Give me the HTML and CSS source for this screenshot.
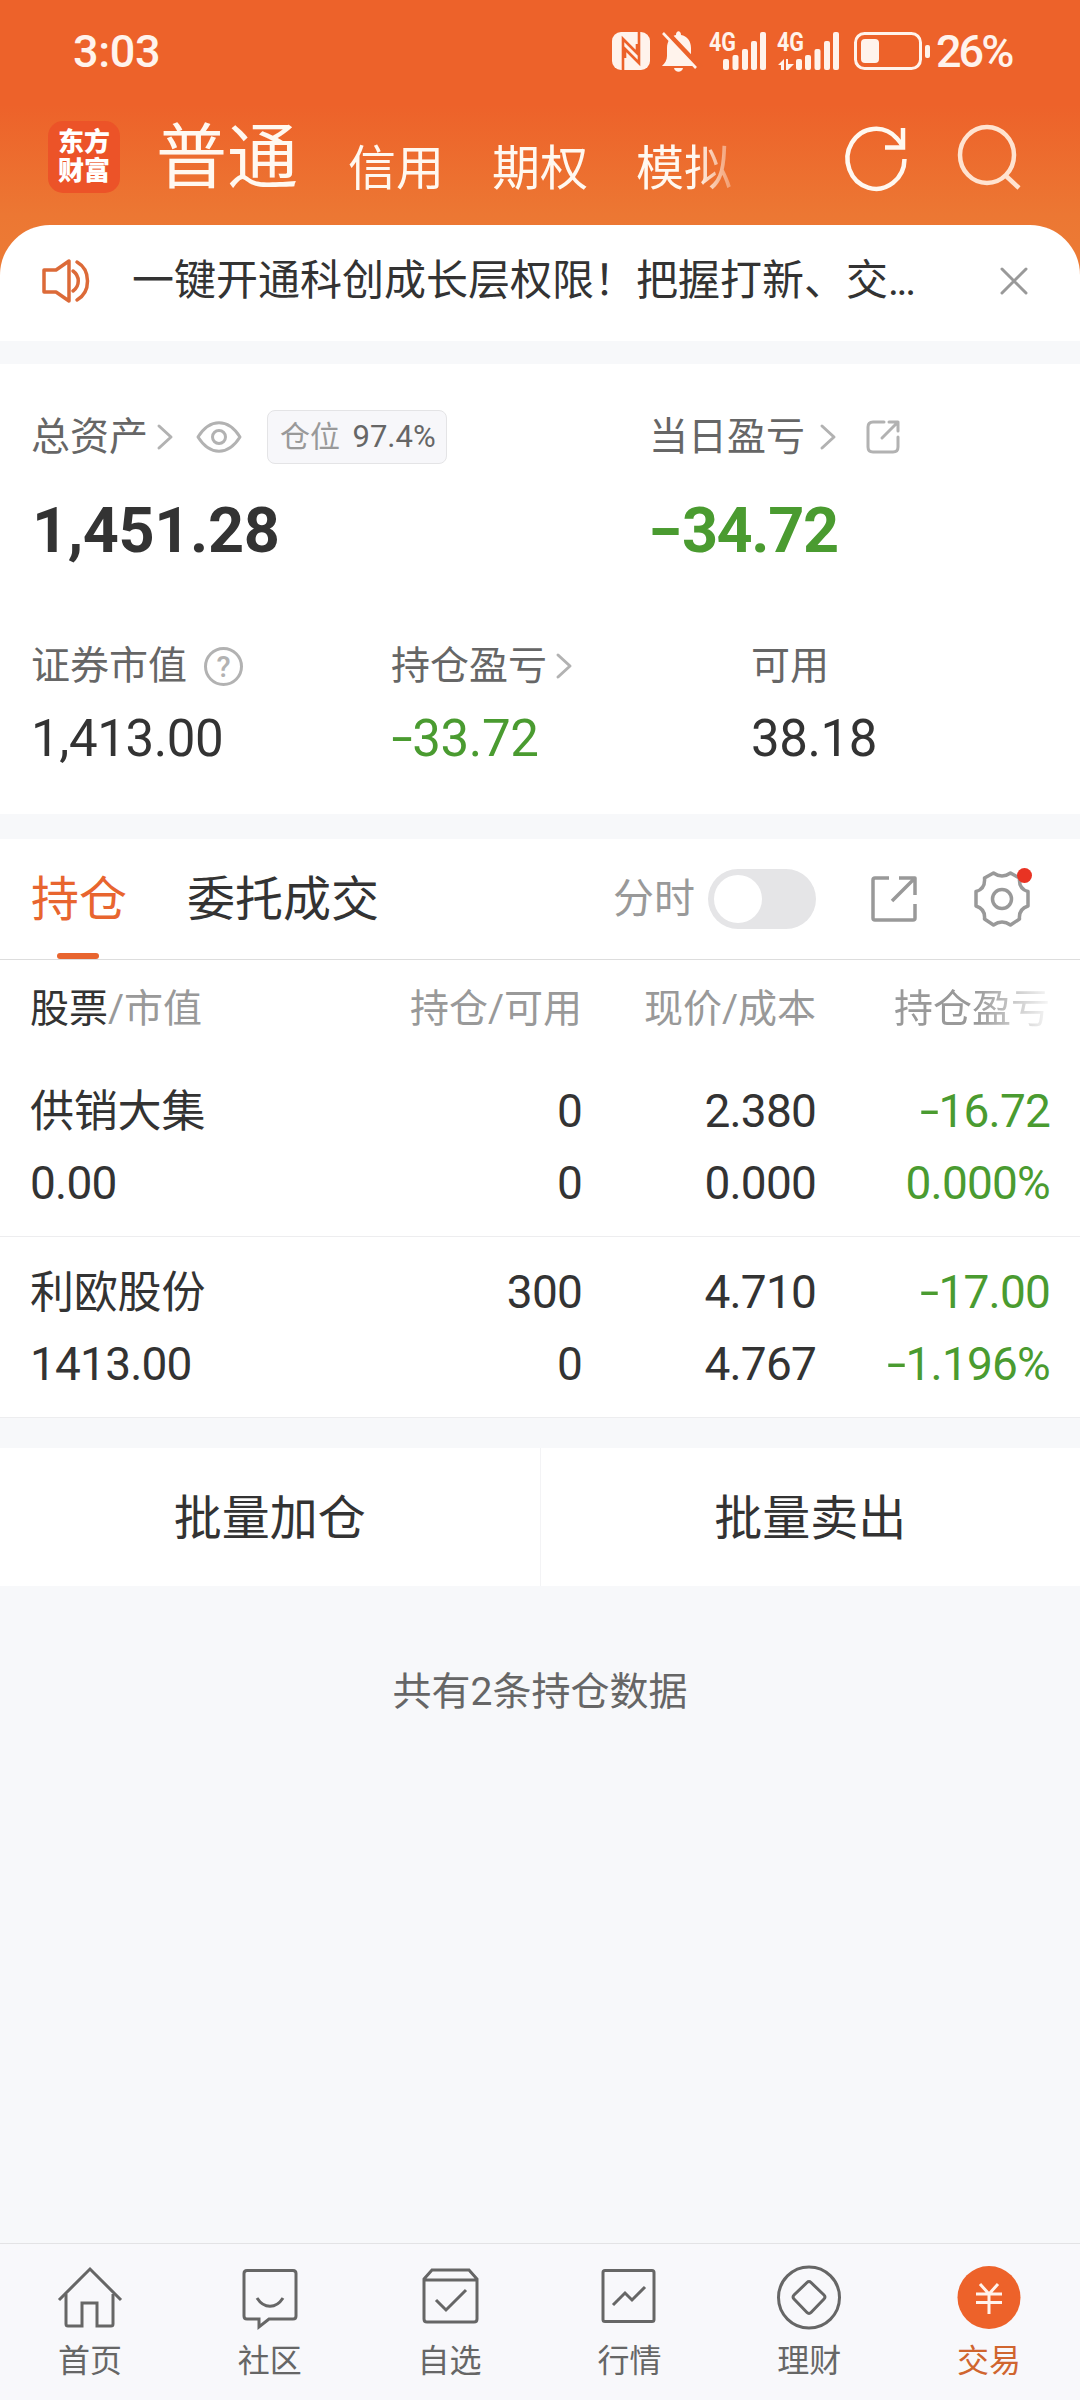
FILE: index.html
```html
<!DOCTYPE html>
<html lang="zh-CN">
<head>
    <meta charset="UTF-8">
    <meta name="viewport" content="width=device-width, initial-scale=1.0">
    <title>交易</title>
    <link rel="stylesheet" href="styles.css">
</head>
<body>
    <header class="top">
        <div class="status-bar">
            <span class="clock">3:03</span>
            <div class="status-icons">
                <svg class="nfc" width="38" height="38" viewBox="0 0 38 38">
                    <rect width="38" height="38" rx="9" fill="#fff3ec"/>
                    <path d="M11 38V7l14 14V12M27 0v31L13 17v9" fill="none" stroke="#ec622a" stroke-width="2.6"/>
                </svg>
                <svg class="bell" width="36" height="41" viewBox="0 0 36 41">
                    <path d="M0 35c3-3 5-6 5-10v-8c0-7 4-12 9-13 0-5 5-5 5 0 6 1 10 6 10 13v8c0 4 1 6 3 10z" fill="#fff3ec"/>
                    <path d="M12 37h9c-1 5-8 5-9 0z" fill="#fff3ec"/>
                    <path d="M3 0l35 37" stroke="#ec622a" stroke-width="6"/>
                    <path d="M1 2l33 35" stroke="#fff3ec" stroke-width="2.6"/>
                </svg>
                <svg class="signal" width="56" height="38" viewBox="0 0 56 38" fill="#fff3ec">
                    <text x="-1" y="19" textLength="27" lengthAdjust="spacingAndGlyphs" class="net">4G</text>
                    <rect x="13" y="27" width="6" height="11" rx="2"/>
                    <rect x="22.500" y="23" width="6" height="15" rx="2"/>
                    <rect x="32" y="17" width="6" height="21" rx="2"/>
                    <rect x="41" y="9" width="6" height="29" rx="2"/>
                    <rect x="50" y="0" width="6" height="38" rx="2"/>
                </svg>
                <svg class="signal" width="61" height="38" viewBox="0 0 61 38" fill="#fff3ec">
                    <text x="-1" y="19" textLength="27" lengthAdjust="spacingAndGlyphs" class="net">4G</text>
                    <path d="M0 33l6-6v11H3v-5zM8 27h2v5h6l-6 6H8z"/>
                    <rect x="18" y="27" width="6" height="11" rx="2"/>
                    <rect x="27" y="23" width="6" height="15" rx="2"/>
                    <rect x="36.500" y="17" width="6" height="21" rx="2"/>
                    <rect x="46" y="9" width="6" height="29" rx="2"/>
                    <rect x="55" y="0" width="6" height="38" rx="2"/>
                </svg>
                <svg class="battery" width="76" height="38" viewBox="0 0 76 38">
                    <rect x="1.500" y="1.500" width="65" height="35" rx="9" fill="none" stroke="#fff3ec" stroke-width="3"/>
                    <rect x="7" y="7" width="18" height="24" rx="4" fill="#fff3ec"/>
                    <rect x="71" y="13" width="5" height="13" rx="2" fill="#fff3ec"/>
                </svg>
                <span class="percent">26%</span>
            </div>
        </div>

        <div class="account-bar">
            <div class="logo"><span>东方</span><span>财富</span></div>
            <nav class="accounts">
                <a class="current">普通</a>
                <a>信用</a>
                <a>期权</a>
                <a>模拟</a>
            </nav>
            <svg class="refresh" width="62" height="64" viewBox="0 0 62 64" fill="none" stroke="#fff8f0" stroke-width="4.500">
                <path d="M59.500 33A28.500 30 0 1 1 52 12.500q4 4 6 9"/>
                <path d="M58 2v19.500H40"/>
            </svg>
            <svg class="search" width="64" height="66" viewBox="0 0 64 66" fill="none" stroke="#ffe3d0" stroke-width="4.500">
                <ellipse cx="29" cy="31" rx="27" ry="28"/>
                <path d="M47 51l14 13"/>
            </svg>
        </div>

        <div class="notice">
            <svg width="48" height="44" viewBox="0 0 48 44" fill="none" stroke="#dc6a38" stroke-width="3.500" stroke-linejoin="round" stroke-linecap="round">
                <path d="M2 11h12l13-9v40l-13-9H2z"/>
                <path d="M31 12c7 5 7 15 0 20M35 3c14 8 14 30 0 38"/>
            </svg>
            <p>一键开通科创成长层权限！把握打新、交<span class="dots">...</span></p>
            <svg class="close" width="28" height="28" viewBox="0 0 28 28" stroke="#999" stroke-width="3" stroke-linecap="round">
                <path d="M2 2l24 24M26 2L2 26"/>
            </svg>
        </div>
    </header>

    <section class="assets">
        <div class="main-row">
            <div class="asset">
                <div class="label">
                    <span>总资产</span>
                    <svg class="chevron" width="16" height="26" viewBox="0 0 16 26"><path d="M2 2l12 11L2 24"/></svg>
                    <svg class="eye" width="46" height="32" viewBox="0 0 46 32">
                        <path d="M2 16C14-3 32-3 44 16 32 35 14 35 2 16z"/>
                        <circle cx="23" cy="16" r="6.500"/>
                    </svg>
                    <span class="ratio">仓位 <b>97.4%</b></span>
                </div>
                <div class="big">1,451.28</div>
            </div>
            <div class="asset">
                <div class="label">
                    <span>当日盈亏</span>
                    <svg class="chevron wide" width="16" height="26" viewBox="0 0 16 26"><path d="M2 2l12 11L2 24"/></svg>
                    <svg class="share-small" width="34" height="34" viewBox="0 0 34 34">
                        <path d="M18 2H7Q2 2 2 7v20q0 5 5 5h20q5 0 5-5V17"/>
                        <path d="M23 2h9v9M32 2L16 18"/>
                    </svg>
                </div>
                <div class="big green"><i>-</i>34.72</div>
            </div>
        </div>
        <div class="sub-row">
            <div class="asset">
                <div class="label">
                    <span>证券市值</span>
                    <span class="help">?</span>
                </div>
                <div class="amount">1,413.00</div>
            </div>
            <div class="asset">
                <div class="label">
                    <span>持仓盈亏</span>
                    <svg class="chevron near" width="16" height="26" viewBox="0 0 16 26"><path d="M2 2l12 11L2 24"/></svg>
                </div>
                <div class="amount green"><i>-</i>33.72</div>
            </div>
            <div class="asset">
                <div class="label"><span>可用</span></div>
                <div class="amount">38.18</div>
            </div>
        </div>
    </section>

    <section class="positions">
        <div class="tabs">
            <a class="tab active">持仓</a>
            <a class="tab">委托成交</a>
            <div class="tools">
                <span>分时</span>
                <span class="toggle"></span>
                <svg class="share" width="46" height="46" viewBox="0 0 46 46">
                    <path d="M18 2H4Q2 2 2 4v38q0 2 2 2h38q2 0 2-2V28"/>
                    <path d="M28 2h16v17M43 3L21 25"/>
                </svg>
                <span class="settings">
                    <svg width="56" height="56" viewBox="0 0 56 56">
                        <path d="M19.500 2Q28 8 36.500 2L45.500 7Q44.500 18 54 20.500V35Q44.500 38 45.500 48L36.500 54Q28 48 19.500 54L10.500 48Q11.500 38 2 35V20.500Q11.500 18 10.500 7z"/>
                        <circle cx="28" cy="28" r="9.500"/>
                    </svg>
                </span>
            </div>
        </div>

        <div class="row head">
            <div><em>股票</em>/市值</div>
            <div>持仓/可用</div>
            <div>现价/成本</div>
            <div class="fade">持仓盈亏</div>
        </div>
        <div class="row">
            <div><p class="name">供销大集</p><p>0.00</p></div>
            <div><p>0</p><p>0</p></div>
            <div><p>2.380</p><p>0.000</p></div>
            <div class="green"><p><i>-</i>16.72</p><p>0.000%</p></div>
        </div>
        <div class="row">
            <div><p class="name">利欧股份</p><p>1413.00</p></div>
            <div><p>300</p><p>0</p></div>
            <div><p>4.710</p><p>4.767</p></div>
            <div class="green"><p><i>-</i>17.00</p><p><i>-</i>1.196%</p></div>
        </div>
    </section>

    <div class="batch">
        <a>批量加仓</a>
        <a>批量卖出</a>
    </div>
    <p class="total">共有2条持仓数据</p>

    <nav class="bottom-nav">
        <a>
            <svg width="66" height="64" viewBox="0 0 66 64">
                <path d="M2 34L33 3l31 31"/>
                <path d="M9 28v30q0 2 2 2h14V37h15v23h14q2 0 2-2V28"/>
            </svg>
            <span>首页</span>
        </a>
        <a>
            <svg width="66" height="64" viewBox="0 0 66 64">
                <path d="M8 4.500h46q3 0 3 3V50q0 3-3 3H30l-10 8v-8H8q-3 0-3-3V7.500q0-3 3-3z" transform="translate(2)"/>
                <path d="M20 32c7 11 19 11 26 0"/>
            </svg>
            <span>社区</span>
        </a>
        <a>
            <svg width="66" height="64" viewBox="0 0 66 64">
                <path d="M7 13l8-9h37l8 9v40q0 3-3 3H10q-3 0-3-3zM7 14h53M19 34l10 10 20-20"/>
            </svg>
            <span>自选</span>
        </a>
        <a>
            <svg width="66" height="64" viewBox="0 0 66 64">
                <rect x="7" y="4.500" width="51" height="51" rx="2"/>
                <path d="M17 39l12-12 7 7 13-13"/>
            </svg>
            <span>行情</span>
        </a>
        <a>
            <svg width="66" height="64" viewBox="0 0 66 64">
                <circle cx="33" cy="31.500" r="30.500"/>
                <path d="M31 16.500q2-2 4 0l13 12.500q2 2 0 4L35 46.500q-2 2-4 0L18 33q-2-2 0-4z"/>
            </svg>
            <span>理财</span>
        </a>
        <a class="on">
            <svg width="66" height="64" viewBox="0 0 66 64">
                <circle class="disc" cx="33" cy="31.500" r="31.500"/>
                <path d="M24 18l9 10 9-10M20 28h26M20 36.500h26M33 28v20"/>
            </svg>
            <span>交易</span>
        </a>
    </nav>
</body>
</html>
```
FILE: styles.css
```css
* {
    box-sizing: border-box;
}

body {
    margin: 0;
    height: 2400px;
    display: flex;
    flex-direction: column;
    background-color: #F7F8FA;
    color: #333333;
    font-family: Roboto, "Noto Sans CJK SC", sans-serif;
    font-size: 39px;
}

p {
    margin: 0;
}

svg {
    flex: none;
    overflow: visible;
}

/* minus signs are wider than the font's hyphen */
i {
    display: inline-block;
    font-style: normal;
    transform: translateY(-1px) scaleX(1.5);
    margin: 0 0.08em 0 0.07em;
}

.green {
    color: #4A9B30;
}

/* header */
.top {
    background: linear-gradient(#ED622A 0, #ED622A 105px, #EC7733 215px, #EC7B35 270px);
}

.status-bar {
    height: 102px;
    display: flex;
    justify-content: space-between;
    align-items: center;
    padding: 0 66px 0 73px;
    color: #FFF3EC;
    font-size: 45px;
    font-weight: 500;
}

.clock {
    letter-spacing: -0.3px;
}

.status-icons {
    display: flex;
    align-items: center;
}

.bell { margin-left: 12px; }
.signal { margin-left: 12px; }
.battery { margin: 0 6px 0 15px; }

.net {
    font-size: 26px;
    font-weight: 700;
}

.percent {
    width: 78px;
    letter-spacing: -3px;
}

.account-bar {
    height: 123px;
    display: flex;
    align-items: flex-start;
    padding: 19px 58px 0 48px;
}

.logo {
    width: 72px;
    height: 72px;
    padding-top: 7px;
    border-radius: 15px;
    background-color: #EC5328;
    color: #FFFFFF;
    font-size: 26px;
    font-weight: 900;
    line-height: 29px;
    text-align: center;
}

.logo span {
    display: block;
}

.accounts {
    flex: 1;
    display: flex;
    gap: 48px;
    margin-left: 36px;
    color: #FFF8F0;
    font-size: 48px;
    line-height: 96px;
    -webkit-mask-image: linear-gradient(90deg, #000 540px, transparent 592px);
    mask-image: linear-gradient(90deg, #000 540px, transparent 592px);
}

.accounts .current {
    font-size: 71px;
    line-height: 74px;
    margin-right: 2px;
}

.refresh {
    margin: 5px 51px 0 0;
}

.search {
    margin-top: 3px;
}

.notice {
    height: 116px;
    display: flex;
    align-items: center;
    padding: 0 52px 4px 42px;
    border-radius: 50px 50px 0 0;
    background-color: #FFFFFF;
    font-size: 42px;
    line-height: 60px;
}

.notice p {
    flex: 1;
    margin-left: 42px;
    white-space: nowrap;
}

.dots {
    letter-spacing: -2.5px;
}

/* assets */
.assets {
    height: 450px;
    margin: 23px 0 25px;
    padding: 43px 0 0 31px;
    background-color: #FFFFFF;
}

.main-row {
    display: grid;
    grid-template-columns: 618px 1fr;
    height: 229px;
}

.sub-row {
    display: grid;
    grid-template-columns: 360px 360px 1fr;
}

.label {
    display: flex;
    align-items: center;
    height: 60px;
    color: #666666;
    line-height: 60px;
}

.label svg {
    fill: none;
    stroke: #B2B2B2;
    stroke-width: 3;
    stroke-linecap: round;
    stroke-linejoin: round;
}

.chevron { margin-left: 9px; }
.chevron.wide { margin-left: 15px; }
.chevron.near { margin-left: 9px; }
.eye { margin-left: 23px; }
.share-small { margin-left: 30px; }

.ratio {
    width: 180px;
    height: 54px;
    margin-left: 25px;
    padding-left: 12px;
    border: 1px solid #E4E4E6;
    border-radius: 8px;
    background-color: #F7F7FA;
    color: #999999;
    font-size: 30px;
    line-height: 52px;
    white-space: nowrap;
}

.ratio b {
    margin-left: 5px;
    color: #666666;
    font-weight: 400;
    font-size: 31px;
}

.help {
    width: 39px;
    height: 39px;
    margin-left: 17px;
    border: 3px solid #B2B2B2;
    border-radius: 50%;
    color: #B2B2B2;
    font-size: 29px;
    font-weight: 500;
    line-height: 34px;
    text-align: center;
}

.big {
    margin-top: 24px;
    padding-left: 1px;
    font-size: 63px;
    font-weight: 700;
    line-height: 80px;
    letter-spacing: -0.4px;
}

.big.green {
    padding-left: 0;
    letter-spacing: -1.4px;
}

.amount {
    margin-top: 11px;
    font-size: 51px;
    line-height: 64px;
    letter-spacing: -0.4px;
}

/* positions */
.positions {
    background-color: #FFFFFF;
}

.tabs {
    display: flex;
    height: 121px;
    padding: 0 50px 0 31px;
    border-bottom: 1px solid #DDDDDD;
}

.tab {
    position: relative;
    margin-right: 60px;
    font-size: 48px;
    line-height: 122px;
}

.tab.active {
    color: #E8652F;
}

.tab.active::after {
    content: "";
    position: absolute;
    left: 26px;
    bottom: 0;
    width: 42px;
    height: 6px;
    border-radius: 3px;
    background-color: #E8652F;
}

.tools {
    flex: 1;
    display: flex;
    align-items: center;
    justify-content: flex-end;
    color: #999999;
    font-size: 41px;
    line-height: 60px;
}

.tools svg {
    fill: none;
    stroke: #999999;
    stroke-width: 3.500;
    stroke-linejoin: round;
}

.toggle {
    width: 108px;
    height: 60px;
    margin-left: 13px;
    padding: 6px;
    border-radius: 30px;
    background-color: #E5E5E7;
}

.toggle::before {
    content: "";
    display: block;
    width: 48px;
    height: 48px;
    border-radius: 50%;
    background-color: #FFFFFF;
}

.share {
    margin: 0 57px 0 55px;
}

.settings {
    position: relative;
    height: 56px;
}

.settings svg {
    display: block;
}

.settings::after {
    content: "";
    position: absolute;
    top: -3px;
    right: -2px;
    width: 15px;
    height: 15px;
    border-radius: 50%;
    background-color: #E93323;
}

.row {
    display: grid;
    grid-template-columns: 1fr 240px 234px 234px;
    height: 181px;
    padding: 19px 30px 0 30px;
    border-bottom: 1px solid #EDEDEF;
    font-size: 46px;
    line-height: 72px;
    letter-spacing: -0.8px;
}

.row > div + div {
    text-align: right;
}

.row .name {
    font-size: 44px;
    line-height: 74px;
    margin-bottom: -2px;
    letter-spacing: -0.2px;
}

.row.head {
    height: 96px;
    padding-top: 0;
    border: none;
    color: #999999;
    font-size: 39px;
    line-height: 99px;
    letter-spacing: 0;
}

.row em {
    color: #333333;
    font-style: normal;
}

.fade {
    -webkit-mask-image: linear-gradient(90deg, #000 160px, transparent 240px);
    mask-image: linear-gradient(90deg, #000 160px, transparent 240px);
}

.batch {
    display: flex;
    height: 138px;
    margin-top: 30px;
    background-color: #FFFFFF;
    font-size: 48px;
    line-height: 141px;
    text-align: center;
}

.batch a {
    flex: 1;
}

.batch a:first-child {
    border-right: 1px solid #F3F3F5;
}

.total {
    margin-top: 76px;
    color: #666666;
    line-height: 60px;
    text-align: center;
}

/* bottom navigation */
.bottom-nav {
    display: flex;
    height: 157px;
    margin-top: auto;
    padding-right: 1px;
    border-top: 1px solid #E3E3E5;
    background-color: #F8F8FB;
    color: #666666;
    font-size: 32px;
}

.bottom-nav a {
    flex: 1;
    display: flex;
    flex-direction: column;
    align-items: center;
    padding-top: 22px;
}

.bottom-nav svg {
    fill: none;
    stroke: #666666;
    stroke-width: 3;
}

.bottom-nav span {
    margin-top: 6px;
    line-height: 50px;
}

.bottom-nav .on {
    color: #D0652F;
}

.bottom-nav .on svg {
    stroke: #FFF3EC;
}

.bottom-nav .disc {
    fill: #ED622A;
    stroke: none;
}
```
